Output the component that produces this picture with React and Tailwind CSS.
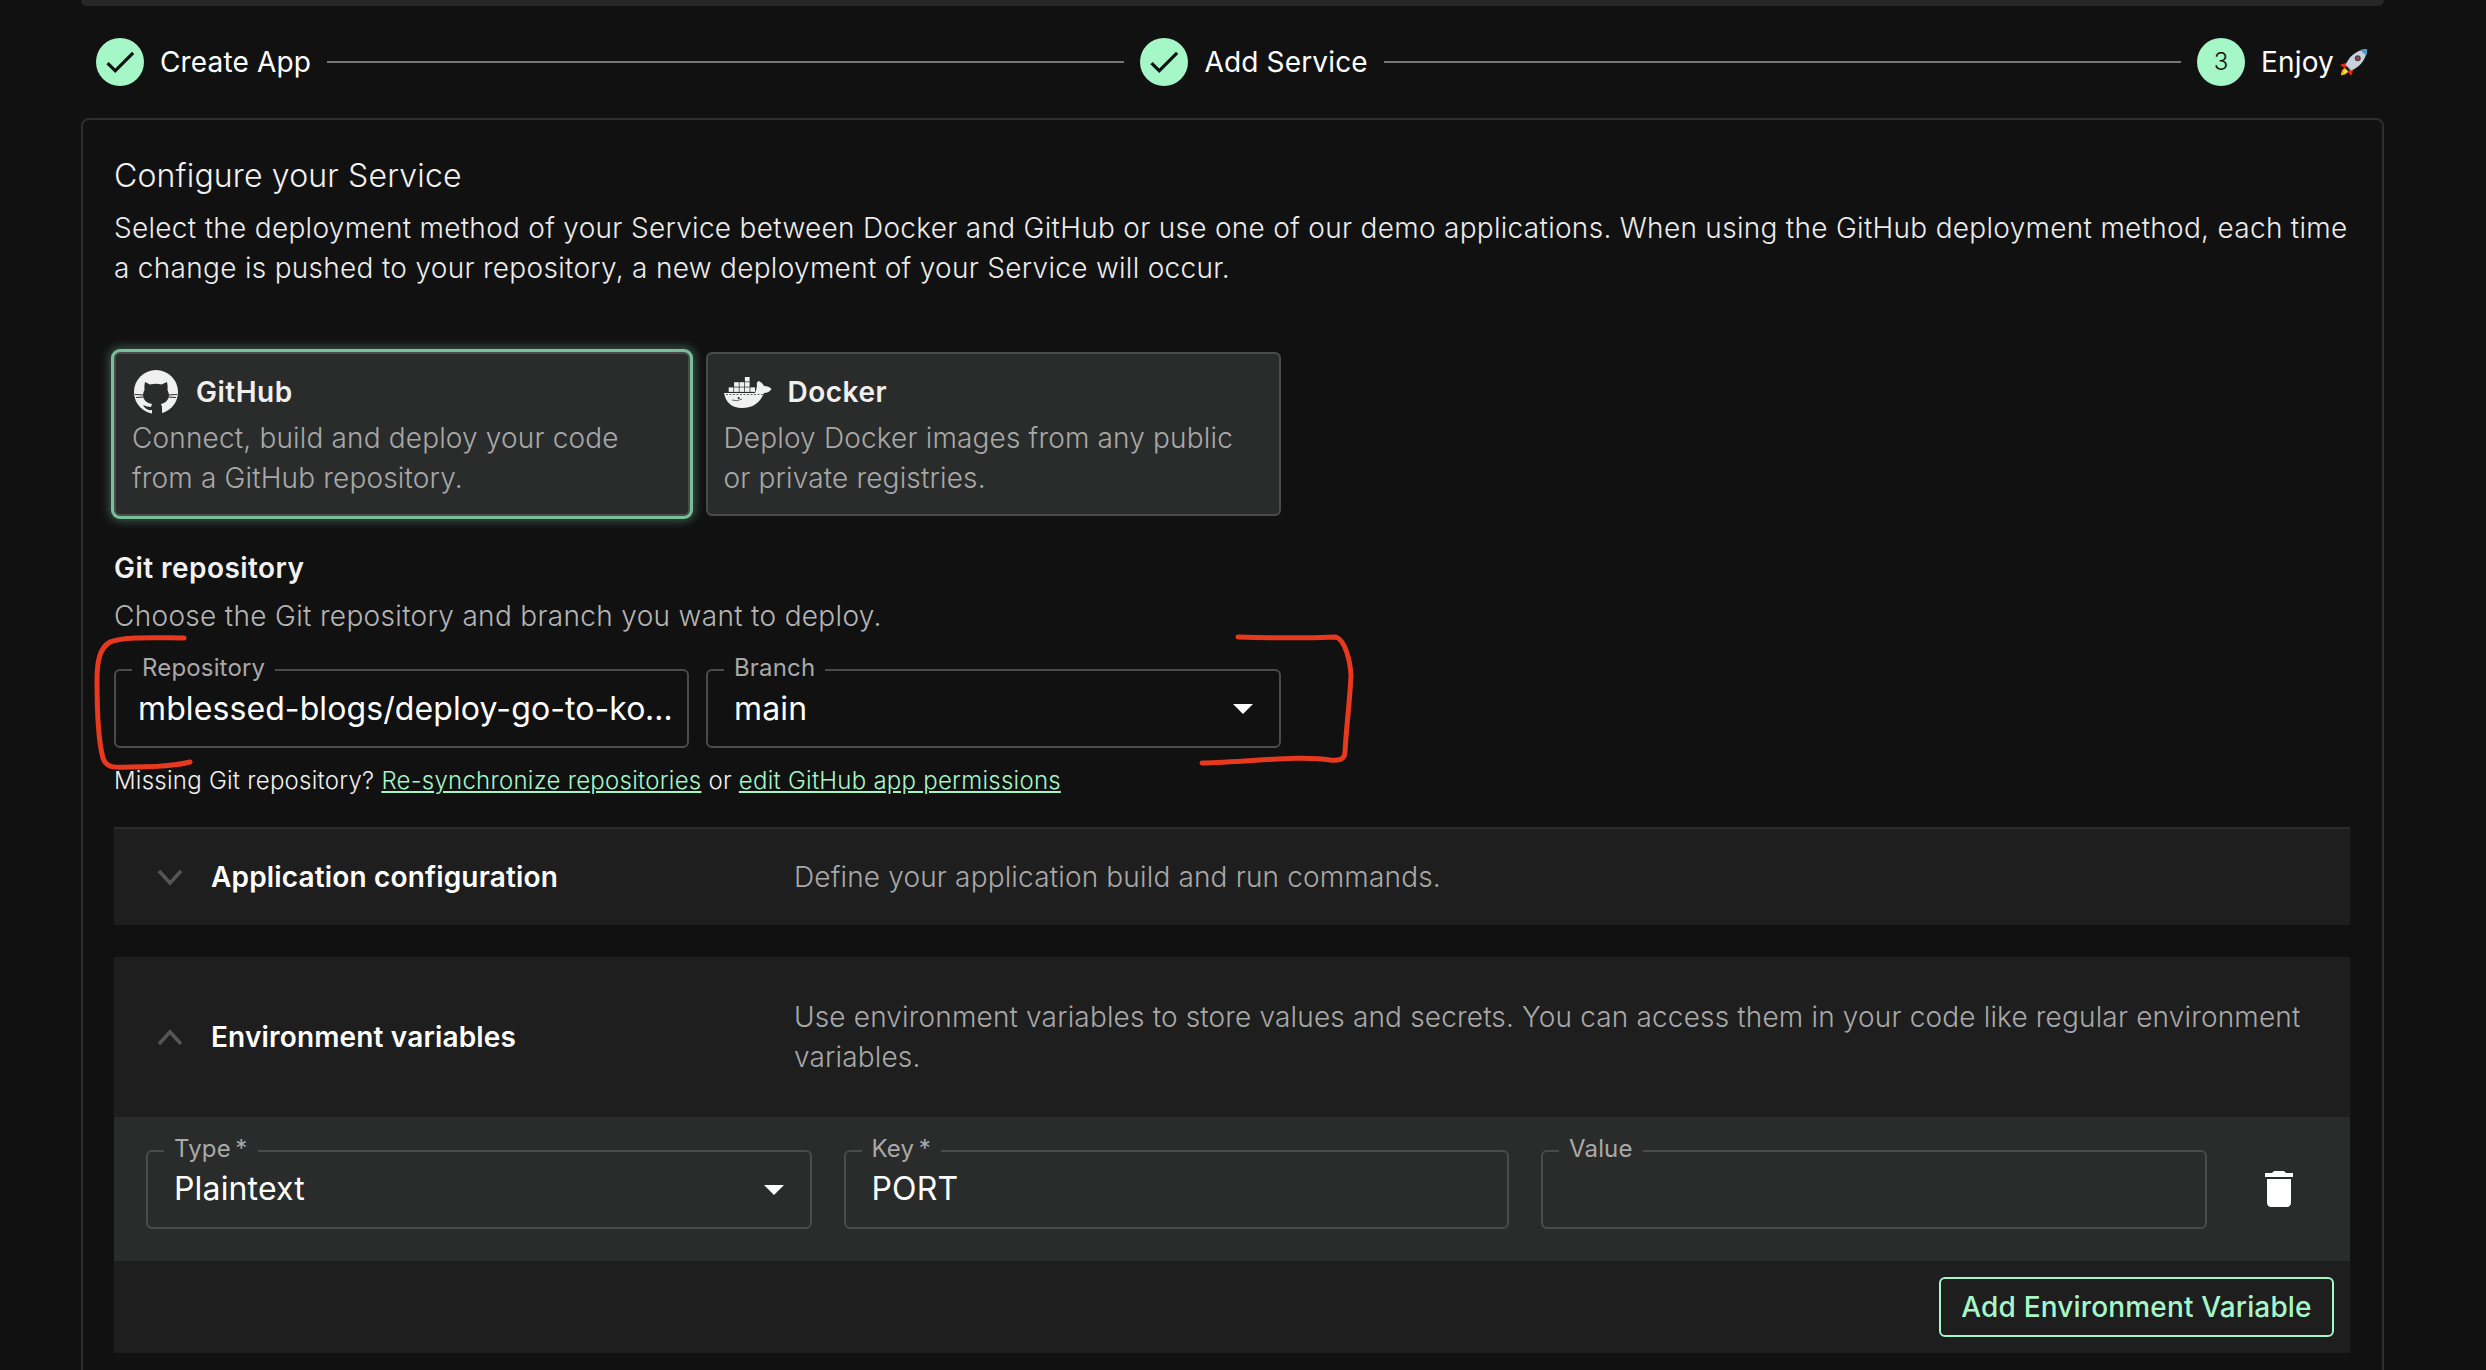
import React from "react";

const Check = () => (
  <svg viewBox="0 0 24 24" className="w-[38px] h-[38px] fill-[#111111]">
    <path d="M9 16.17 4.83 12l-1.42 1.41L9 19 21 7l-1.41-1.41z" />
  </svg>
);

const GithubMark = () => (
  <svg viewBox="0 0 44 44" className="w-[44px] h-[44px] ml-[2px]">
    <circle cx="22" cy="22" r="22" fill="#f0f0f0" />
    <path d="M11 12 L16 14.5 Q22 13 27.5 14.5 L33 12 Q34 16 33.5 20 Q36 25 34 29 Q32 33 27 34 Q28 36 28 38 V44 H18 V40 Q12 41 9 35 Q13 37 17 37 L18 34 Q12 33 10 29 Q8 24 10.5 20 Q10 16 11 12 Z" fill="#2a2c2b" />
    <path d="M1 24.5 L10 25 M2 27.5 L10 27 M43 24.5 L34 25 M42 27.5 L34 27" stroke="#2a2c2b" strokeWidth="1" />
  </svg>
);

const DockerMark = () => {
  const cells = [
    [20.9, 1], [10.1, 6.2], [15.5, 6.2], [20.9, 6.2],
    [4.7, 11.4], [10.1, 11.4], [15.5, 11.4], [20.9, 11.4], [26.3, 11.4],
  ];
  return (
    <svg viewBox="0 0 48 32" className="w-[48px] h-[32px]">
      {cells.map(([x, y]) => (
        <rect key={`${x}-${y}`} x={x} y={y} width="4.7" height="4.5" fill="#f0f0f0" />
      ))}
      <path d="M0 17 H31 Q33 12 33 9 Q32 6 35 5 Q39 7 40 10 Q45 10 47.5 13 Q45 17 40 17 Q34 32 18 32 Q3 32 0 17Z" fill="#f0f0f0" />
      <path d="M2 18.5 H40" stroke="#2a2c2b" strokeWidth="0.7" strokeDasharray="2 1.5" />
      <circle cx="14.7" cy="22" r="1.1" fill="#2a2c2b" />
      <path d="M8 24 Q13 26 18 23" stroke="#2a2c2b" strokeWidth="0.7" fill="none" />
    </svg>
  );
};

const Rocket = () => (
  <svg viewBox="0 0 32 32" className="w-[30px] h-[30px] ml-[5px]">
    <path d="M7 17 L1 19 L5 22 L9 21Z" fill="#e02a12" />
    <path d="M15 25 L13 31 L10 27 L11 23Z" fill="#e02a12" />
    <path d="M6 22 C3 24 2 28 2 30 C5 30 8 29 10 26Z" fill="#f7b500" />
    <path d="M8 24 C6 25 5 27 5 28 C6 28 8 27 9 26Z" fill="#ffe36b" />
    <path d="M7 19 C10 11 18 3 30 2 C29 14 21 22 13 25Z" fill="#c7d3da" />
    <path d="M23 3 C26 2 28 2 30 2 C30 4 30 6 29 9 C27 8 24 5 23 3Z" fill="#4f9bd1" />
    <path d="M7 19 L13 25 L10 23 Z" fill="#6f7d86" />
    <circle cx="20" cy="12" r="3.2" fill="#3a4650" />
    <circle cx="20" cy="12" r="1.8" fill="#c0343a" />
  </svg>
);

const ArrowDown = ({ className }) => (
  <svg viewBox="0 0 24 24" className={className}>
    <path d="M7 10l5 5 5-5z" fill="#ffffff" />
  </svg>
);

const Chevron = ({ up }) => (
  <svg viewBox="0 0 26 18" className="w-[26px] h-[18px] shrink-0 -ml-[1px]">
    <path d={up ? "M2 16 L13 4 L24 16" : "M2 3 L13 15 L24 3"} fill="none" stroke="#555555" strokeWidth="3.6" />
  </svg>
);

const Step = ({ done, n, label, extra }) => (
  <div className="flex items-center shrink-0">
    <div className="w-[48px] h-[48px] rounded-full bg-[#a6f7c8] flex items-center justify-center text-[24px] text-[#111111] font-light">
      {done ? <Check /> : n}
    </div>
    <span className="ml-[16px] text-[28px] leading-[40px] text-white">{label}</span>
    {extra}
  </div>
);

const Line = () => <div className="flex-1 h-[2px] bg-[#777777] mx-[16px]" />;

const Field = ({ label, value, arrow, bg, compact, className }) => (
  <div className={`relative h-[79px] border-2 border-[#4b4b4b] rounded-[6px] flex items-center ${className}`}>
    <span className={`absolute left-[16px] top-[-17px] px-[10px] text-[24px] leading-[28px] text-[#a9a9a9] ${bg}`}>{label}</span>
    <span className={`text-[32px] leading-[40px] text-white ${compact ? "truncate tracking-[0.1px] pl-[22px] pr-[10px]" : "pl-[26px] pr-[20px]"}`}>{value}</span>
    {arrow && <ArrowDown className="absolute right-[12px] top-[13px] w-[48px] h-[48px]" />}
  </div>
);

const Option = ({ icon, name, desc, selected }) => (
  <div className={`w-[575.5px] h-[164px] rounded-[6px] bg-[#2a2c2b] border-2 border-[#4b4b4b] pl-[16px] pt-[16px] ${selected ? "shadow-[0_0_0_3px_#79c09a,0_0_10px_5px_#79c09a66]" : ""}`}>
    <div className="flex items-center h-[44px] mb-[4px]">
      <span className="w-[64px] flex items-center shrink-0">{icon}</span>
      <span className="text-[28px] font-semibold tracking-[0.5px] text-[#f0f0f0]">{name}</span>
    </div>
    <p className="text-[28px] leading-[40px] text-[#a8a8a8] font-light">{desc}</p>
  </div>
);

export default function App() {
  return (
    <div className="relative w-[2486px] h-[1370px] overflow-hidden bg-[#111111] text-white tracking-[0.01em] font-['Inter',sans-serif]">
      <div className="ml-[81px] w-[2303px]">
        <div className="h-[6px] bg-[#272727] rounded-b-[6px]" />
        <div className="flex items-center pl-[15px] pr-[15px] mt-[32px] h-[48px]">
          <Step done label="Create App" />
          <Line />
          <Step done label="Add Service" />
          <Line />
          <Step n="3" label="Enjoy" extra={<Rocket />} />
        </div>
        <div className="mt-[32px] h-[1400px] border-2 border-[#2e2e2e] rounded-[8px] pl-[31px] pr-[32px] pt-[32px]">
          <h2 className="text-[32px] leading-[48px] font-light text-[#f2f2f2]">Configure your Service</h2>
          <p className="mt-[8px] text-[28px] leading-[40px] font-light tracking-[0.295px] whitespace-nowrap text-[#ececec]">
            Select the deployment method of your Service between Docker and GitHub or use one of our demo applications. When using the GitHub deployment method, each time<br />a change is pushed to your repository, a new deployment of your Service will occur.
          </p>
          <div className="flex gap-[16px] mt-[64px]">
            <Option selected name="GitHub" icon={<GithubMark />} desc={<>Connect, build and deploy your code<br />from a GitHub repository.</>} />
            <Option name="Docker" icon={<DockerMark />} desc={<>Deploy Docker images from any public<br />or private registries.</>} />
          </div>
          <h3 className="mt-[32px] text-[28px] leading-[40px] font-semibold tracking-[0.45px] text-[#f2f2f2]">Git repository</h3>
          <p className="mt-[8px] text-[28px] leading-[40px] font-light tracking-[0.32px] text-[#b5b5b5]">Choose the Git repository and branch you want to deploy.</p>
          <div className="flex gap-[17px] mt-[33px]">
            <Field label="Repository" value="mblessed-blogs/deploy-go-to-koyeb" compact bg="bg-[#111111]" className="w-[575px]" />
            <Field label="Branch" value="main" arrow bg="bg-[#111111]" className="w-[575px]" />
          </div>
          <p className="mt-[17px] text-[24px] leading-[32px] font-light tracking-[0.25px] text-[#f0f0f0]">
            Missing Git repository? <a className="text-[#a6f7c8] underline">Re-synchronize repositories</a> or <a className="text-[#a6f7c8] underline">edit GitHub app permissions</a>
          </p>
          <div className="mt-[30px] h-[98px] bg-[#1e1e1e] border-t-2 border-[#2c2c2c] flex items-center pl-[44px]">
            <Chevron />
            <span className="ml-[28px] w-[583px] text-[28px] font-semibold text-white">Application configuration</span>
            <span className="text-[28px] font-light text-[#a8a8a8]">Define your application build and run commands.</span>
          </div>
          <div className="mt-[32px] bg-[#1e1e1e] h-[396px] flex flex-col">
            <div className="h-[160px] flex items-center pl-[44px] shrink-0">
              <Chevron up />
              <span className="ml-[28px] w-[583px] shrink-0 text-[28px] font-semibold text-white">Environment variables</span>
              <span className="text-[28px] leading-[40px] font-light text-[#a8a8a8] pr-[40px]">Use environment variables to store values and secrets. You can access them in your code like regular environment variables.</span>
            </div>
            <div className="h-[144px] bg-[#2a2c2b] flex items-center pl-[32px] pr-[32px] gap-[32px] shrink-0">
              <Field label={"Type\u2009*"} value="Plaintext" arrow bg="bg-[#2a2c2b]" className="w-[665.5px]" />
              <Field label={"Key\u2009*"} value="PORT" bg="bg-[#2a2c2b]" className="w-[665.5px]" />
              <Field label="Value" value="" bg="bg-[#2a2c2b]" className="w-[665.5px]" />
              <svg viewBox="0 0 24 24" className="w-[48px] h-[48px] ml-[16px] shrink-0 fill-white">
                <path d="M6 19c0 1.1.9 2 2 2h8c1.1 0 2-.9 2-2V7H6v12zM19 4h-3.5l-1-1h-5l-1 1H5v2h14V4z" />
              </svg>
            </div>
            <div className="flex justify-end pr-[16px] pt-[16px]">
              <button className="h-[60px] w-[395px] rounded-[6px] border-2 border-[#a6f7c8] text-[28px] font-medium text-[#a6f7c8]">Add Environment Variable</button>
            </div>
          </div>
        </div>
      </div>
      <svg className="absolute inset-0 w-[2486px] h-[1370px] pointer-events-none" viewBox="0 0 2486 1370" fill="none" stroke="#e8391f" strokeWidth="5" strokeLinecap="round" strokeLinejoin="round">
        <path d="M184 638 C160 638 125 636 110 642 C100 648 97 660 97 680 C97 710 98 740 103 758 C106 768 115 768 130 767 C155 767 175 766 190 762" />
        <path d="M1238 637 C1270 638 1310 638 1336 637 C1345 640 1350 660 1351 675 C1350 700 1346 730 1345 752 C1345 760 1338 761 1330 760 C1300 755 1250 762 1202 763" />
      </svg>
    </div>
  );
}
